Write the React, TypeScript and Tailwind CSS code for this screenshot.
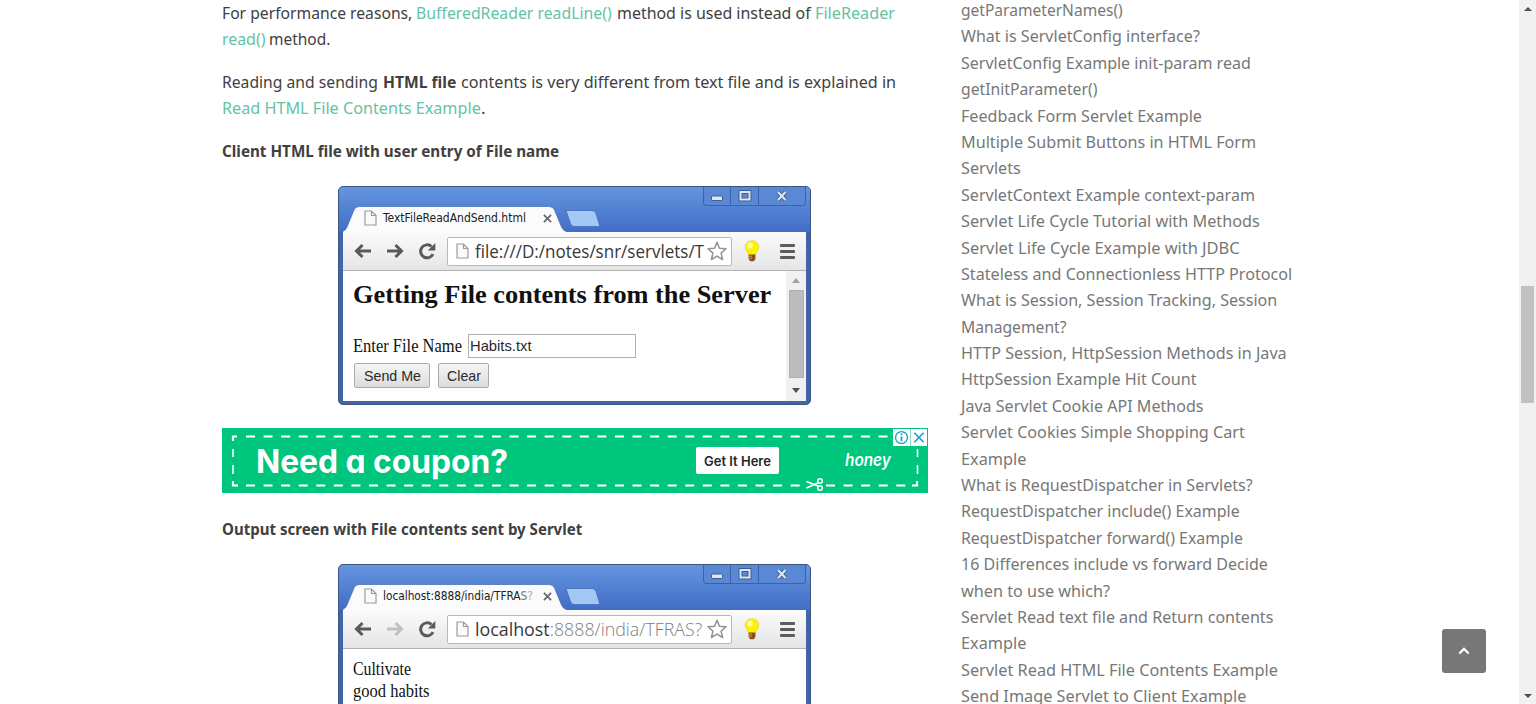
import { useLayoutEffect, useRef, type ReactNode } from "react";

/* Text squeezed or stretched horizontally to an exact width. */
function Fit({ w, className = "", children }: { w: number; className?: string; children: ReactNode }) {
  const ref = useRef<HTMLSpanElement>(null);
  useLayoutEffect(() => {
    const el = ref.current;
    if (el) el.style.transform = `scaleX(${w / el.offsetWidth})`;
  }, [w]);
  return (
    <span className={`inline-block shrink-0 whitespace-nowrap ${className}`} style={{ width: w }}>
      <span ref={ref} className="inline-block origin-left">
        {children}
      </span>
    </span>
  );
}

const sidebar: [string, number][] = [
  ["getParameterNames()", 162],
  ["What is ServletConfig interface?", 239],
  ["ServletConfig Example init-param read", 290],
  ["getInitParameter()", 136],
  ["Feedback Form Servlet Example", 241],
  ["Multiple Submit Buttons in HTML Form", 295],
  ["Servlets", 60],
  ["ServletContext Example context-param", 294],
  ["Servlet Life Cycle Tutorial with Methods", 299],
  ["Servlet Life Cycle Example with JDBC", 279],
  ["Stateless and Connectionless HTTP Protocol", 331],
  ["What is Session, Session Tracking, Session", 316],
  ["Management?", 106],
  ["HTTP Session, HttpSession Methods in Java", 326],
  ["HttpSession Example Hit Count", 236],
  ["Java Servlet Cookie API Methods", 243],
  ["Servlet Cookies Simple Shopping Cart", 284],
  ["Example", 65],
  ["What is RequestDispatcher in Servlets?", 292],
  ["RequestDispatcher include() Example", 279],
  ["RequestDispatcher forward() Example", 282],
  ["16 Differences include vs forward Decide", 307],
  ["when to use which?", 149],
  ["Servlet Read text file and Return contents", 312],
  ["Example", 65],
  ["Servlet Read HTML File Contents Example", 317],
  ["Send Image Servlet to Client Example", 285],
];

function PageIcon({ className }: { className: string }) {
  return (
    <svg viewBox="0 0 13 16" className={className} fill="#fafafa" stroke="#9b9b9b" strokeWidth="1.2">
      <path d="M1 1h6.5l4.5 4.5V15H1zM7.5 1v4.5H12" />
    </svg>
  );
}

function Star() {
  return (
    <svg viewBox="0 0 20 20" className="ml-px h-5 w-5 shrink-0" fill="#fff" stroke="#929292" strokeWidth="1.5" strokeLinejoin="round">
      <path d="M10 1.2l2.500 6 6.500.6-4.900 4.300 1.500 6.400L10 15.100l-5.600 3.400 1.500-6.400L1 7.800l6.500-.6z" />
    </svg>
  );
}

function Bulb() {
  return (
    <svg viewBox="0 0 16 22" className="h-[22px] w-4 shrink-0">
      <path d="M8 .7C3.700.7 1.200 3.700 1.200 7c0 3.600 3.300 5 3.300 8h7c0-3 3.300-4.400 3.300-8C14.800 3.700 12.300.7 8 .7z" fill="#fff200" stroke="#e9cf3a" strokeWidth=".7" />
      <ellipse cx="6.200" cy="5.500" rx="2.600" ry="3" fill="#fffdb0" />
      <path d="M4.600 14.500h6.800v4.500L9.800 21.200H6.200L4.600 19z" fill="#85521f" />
      <path d="M5 16.200h3M5 18.200h3" stroke="#d9a860" strokeWidth=".9" />
    </svg>
  );
}

function BrowserWindow({
  tab,
  address,
  forward,
  children,
}: {
  tab: ReactNode;
  address: ReactNode;
  forward: string;
  children: ReactNode;
}) {
  return (
    <div className="ml-[116px] flex h-[219px] w-[473px] shrink-0 flex-col overflow-hidden rounded-[5px] border border-[#3c5680] bg-[#4066a9]">
      <div className="relative flex h-[45px] shrink-0 items-start justify-between bg-gradient-to-b from-[#6595df] to-[#426dc6]">
        <svg viewBox="0 0 270 45" className="absolute left-0 top-0 h-[45px] w-[270px]">
          <path d="M227 23.500h26q3 0 4 3l3.500 11.500q.4 1.500-1 1.500h-24q-3 0-4-3z" fill="#a4c8f6" stroke="#426cb6" strokeWidth=".8" />
          <path d="M4 46v-2q3-1 4-4l7-17q1.500-3.500 5-3.500h190q4 0 5.500 3.500l7 17q1.700 4 6 5v1z" fill="#fbfbfb" stroke="#3f68b0" strokeWidth=".7" />
        </svg>
        <div className="relative ml-[25px] mt-[20px] flex h-[22px] items-center">
          <PageIcon className="h-4 w-[13px]" />
          <div className="ml-[6px] w-[160px] font-['DejaVu_Sans_Condensed','DejaVu_Sans',sans-serif] text-[12px] leading-[23px] text-[#202020]">
            {tab}
          </div>
          <svg viewBox="0 0 10 10" className="h-[9px] w-[9px]" stroke="#6a6a6a" strokeWidth="2">
            <path d="M1 1l8 8M9 1l-8 8" />
          </svg>
        </div>
        <div className="mr-[4px] flex h-[19px] w-[103px] rounded-b-[4px] border border-t-0 border-[#3b62a7] bg-[#5a88d5]">
          <div className="flex w-[27px] items-center justify-center border-r border-[#3b62a7]">
            <svg viewBox="0 0 14 12" className="mt-1 h-3 w-[14px]">
              <rect x="1.500" y="4" width="11" height="4.500" rx="1" fill="#dfe6f1" stroke="#3a5a90" />
            </svg>
          </div>
          <div className="flex w-[28px] items-center justify-center border-r border-[#3b62a7]">
            <svg viewBox="0 0 14 12" className="h-3 w-[14px]" fill="none">
              <rect x="2.500" y="2" width="9" height="7.500" stroke="#3a5a90" strokeWidth="3.800" />
              <rect x="2.500" y="2" width="9" height="7.500" stroke="#dfe6f1" strokeWidth="2" />
            </svg>
          </div>
          <div className="flex flex-1 items-center justify-center">
            <svg viewBox="0 0 14 12" className="h-3 w-[14px]" fill="none">
              <path d="M3 2l7.500 8M10.500 2L3 10" stroke="#3a5a90" strokeWidth="4" />
              <path d="M3 2l7.500 8M10.500 2L3 10" stroke="#dfe6f1" strokeWidth="2.200" />
            </svg>
          </div>
        </div>
      </div>
      <div className="mx-[4px] flex h-[39px] shrink-0 items-center border-b border-[#b2b2b2] bg-gradient-to-b from-[#fbfbfb] to-[#e5e5e5]">
        <svg viewBox="0 0 18 16" className="ml-[11px] h-4 w-[18px]" fill="none" stroke="#5a5a5a" strokeWidth="3">
          <path d="M17 8H3M8.500 2L2.500 8l6 6" />
        </svg>
        <svg viewBox="0 0 18 16" className={`ml-[14px] h-4 w-[18px] ${forward}`} fill="none" stroke="currentColor" strokeWidth="3">
          <path d="M1 8h14M9.500 2l6 6-6 6" />
        </svg>
        <svg viewBox="0 0 18 18" className="ml-[14px] h-[18px] w-[18px]" fill="none" stroke="#5a5a5a" strokeWidth="3">
          <path d="M15 12.200A6.500 6.500 0 1 1 13.500 4.500" />
          <path d="M17.300 1v7.500H9.800z" fill="#5a5a5a" stroke="none" />
        </svg>
        <div className="ml-[11px] flex h-[29px] w-[285px] items-center rounded-[2px] border border-[#b9b9b9] bg-white pl-[8px]">
          <PageIcon className="h-4 w-[13px] shrink-0" />
          <div className="ml-[6px] flex h-7 w-[231px] items-center text-[19px] leading-7">{address}</div>
          <Star />
        </div>
        <div className="ml-[12px] flex">
          <Bulb />
        </div>
        <div className="ml-[20px] flex w-[15px] flex-col gap-[3px]">
          <div className="h-[3px] rounded-[1px] bg-[#5c5c5c]" />
          <div className="h-[3px] rounded-[1px] bg-[#5c5c5c]" />
          <div className="h-[3px] rounded-[1px] bg-[#5c5c5c]" />
        </div>
      </div>
      <div className="mx-[4px] mb-[3px] flex flex-1 overflow-hidden bg-white font-['Liberation_Serif',serif] text-[#111]">{children}</div>
    </div>
  );
}

function Coupon() {
  return (
    <div className="relative mt-[23px] flex h-[65px] w-[706px] shrink-0 items-center bg-[#00c57d] font-['Inter',sans-serif]">
      <svg viewBox="0 0 706 65" className="absolute inset-0 h-[65px] w-[706px]" fill="none" stroke="#fff" strokeWidth="2.200">
        <path d="M24 8.500H672M24 57.500H584M604 57.500H688" strokeDasharray="9 8.570" />
        <path d="M11 13V8.500h4M11 53v4.500h5M690 57.500h5V53" />
        <path d="M11 21v8M11 37v9M695.500 21v8M695.500 37v9" strokeWidth="1.600" />
        <path d="M584.500 53.500L597 58.500M584.500 60L597 54.500" strokeWidth="1.800" />
        <circle cx="598" cy="53" r="2.300" strokeWidth="1.500" />
        <circle cx="598" cy="60" r="2.300" strokeWidth="1.500" />
      </svg>
      <Fit w={252} className="relative ml-[34px] mt-[2px] text-[32px] font-bold leading-[64px] text-white [font-feature-settings:'cv11']">
        Need a coupon?
      </Fit>
      <div className="relative ml-[188px] flex h-[27px] w-[83px] items-center justify-center rounded-[2px] bg-white">
        <Fit w={67} className="text-[13px] font-semibold leading-[26px] text-[#252525]">
          Get It Here
        </Fit>
      </div>
      <Fit w={46} className="relative ml-[66px] -mt-[2px] text-[17px] font-semibold italic leading-[26px] text-white [font-feature-settings:'cv11']">
        honey
      </Fit>
      <div className="absolute right-px top-px flex h-[17px] w-[34px] gap-px bg-[#8fdcc8]">
        <svg viewBox="0 0 17 18" className="h-[17px] w-[17px] bg-white" fill="none" stroke="#1d9fc4" strokeWidth="1.400">
          <circle cx="8.500" cy="9" r="6.300" />
          <path d="M8.500 8v5M8.500 4.800v1.700" strokeWidth="1.800" />
        </svg>
        <svg viewBox="0 0 17 18" className="h-[17px] w-[16px] bg-white" fill="none" stroke="#1d9fc4" strokeWidth="1.700">
          <path d="M3.500 4l10 10M13.500 4l-10 10" />
        </svg>
      </div>
    </div>
  );
}

export default function App() {
  return (
    <div className="flex h-[704px] w-[1536px] overflow-hidden bg-white font-['Noto_Sans',sans-serif] text-[17px] leading-[26.4px] text-[#404040]">
      <main className="ml-[222px] flex w-[706px] shrink-0 flex-col">
        <p className="flex h-[53px] shrink-0 flex-wrap content-start gap-x-[4.300px]">
          <Fit w={190}>For performance reasons,</Fit>
          <Fit w={196} className="text-[#63c3a4]">BufferedReader readLine()</Fit>
          <Fit w={194}>method is used instead of</Fit>
          <Fit w={80} className="text-[#63c3a4]">FileReader</Fit>
          <Fit w={43} className="text-[#63c3a4]">read()</Fit>
          <Fit w={61}>method.</Fit>
        </p>
        <p className="mt-[16px] flex h-[53px] shrink-0 flex-wrap content-start">
          <Fit w={156}>Reading and sending</Fit>
          <Fit w={73} className="mx-[5px] text-[16.500px] font-bold">HTML file</Fit>
          <Fit w={435}>contents is very different from text file and is explained in</Fit>
          <Fit w={259} className="text-[#63c3a4]">Read HTML File Contents Example</Fit>
          <span>.</span>
        </p>
        <p className="mt-[16px] h-[26px] shrink-0 text-[16.500px] font-bold">
          <Fit w={337}>Client HTML file with user entry of File name</Fit>
        </p>
        <div className="mt-[22px] flex shrink-0">
          <BrowserWindow
            forward="text-[#5a5a5a]"
            tab={<Fit w={143}>TextFileReadAndSend.html</Fit>}
            address={<Fit w={229} className="font-['Open_Sans',sans-serif] text-[#383838]">file:///D:/notes/snr/servlets/T</Fit>}
          >
            <div className="flex flex-1 flex-col pl-[10px] pt-[9px]">
              <Fit w={418} className="text-[26px] font-bold leading-[30px]">Getting File contents from the Server</Fit>
              <div className="mt-[24px] flex h-[24px] items-center">
                <Fit w={109} className="text-[18px] leading-6">Enter File Name</Fit>
                <div className="ml-[6px] flex h-6 w-[168px] items-center border border-[#b0b0b0] pl-px">
                  <Fit w={62} className="font-['Liberation_Sans',sans-serif] text-[15px] leading-5 text-[#2a2a2a]">Habits.txt</Fit>
                </div>
              </div>
              <div className="ml-px mt-[5px] flex gap-[8px] font-['Liberation_Sans',sans-serif] text-[15px] leading-[22px] text-[#2a2a2a]">
                <div className="flex h-[25px] w-[76px] items-center justify-center rounded-[2px] border border-[#aaa] bg-gradient-to-b from-[#f5f5f5] to-[#dcdcdc]">
                  <Fit w={57}>Send Me</Fit>
                </div>
                <div className="flex h-[25px] w-[51px] items-center justify-center rounded-[2px] border border-[#aaa] bg-gradient-to-b from-[#f5f5f5] to-[#dcdcdc]">
                  <Fit w={34}>Clear</Fit>
                </div>
              </div>
            </div>
            <div className="flex w-[20px] flex-col items-center bg-[#f1f1f1] pt-[7px]">
              <div className="h-0 w-0 border-x-4 border-b-[5px] border-x-transparent border-b-[#a3a3a3]" />
              <div className="mt-[7px] h-[88px] w-[15px] border border-[#b0b0b0] bg-[#bcbcbc]" />
              <div className="mt-[10px] h-0 w-0 border-x-4 border-t-[5px] border-x-transparent border-t-[#505050]" />
            </div>
          </BrowserWindow>
        </div>
        <Coupon />
        <p className="mt-[23px] h-[26px] shrink-0 text-[16.500px] font-bold">
          <Fit w={360}>Output screen with File contents sent by Servlet</Fit>
        </p>
        <div className="mt-[22px] flex shrink-0">
          <BrowserWindow
            forward="text-[#c0c0c0]"
            tab={
              <Fit w={150}>
                localhost:8888/india/TFRA<span className="text-[#777]">S</span>
                <span className="text-[#aaa]">?</span>
              </Fit>
            }
            address={
              <Fit w={227} className="font-['Open_Sans',sans-serif] font-light text-[#808080]">
                <span className="font-normal text-[#383838]">localhost</span>:8888/india/TFRAS?
              </Fit>
            }
          >
            <div className="flex flex-col pl-[10px] pt-[9px] text-[18px] leading-[22px]">
              <Fit w={58}>Cultivate</Fit>
              <Fit w={77}>good habits</Fit>
            </div>
          </BrowserWindow>
        </div>
      </main>
      <aside className="-mt-[3px] ml-[33px] flex w-[340px] shrink-0 flex-col text-[#777]">
        {sidebar.map(([label, w], i) => (
          <div key={i} className="h-[26.4px] shrink-0">
            <Fit w={w}>{label}</Fit>
          </div>
        ))}
      </aside>
      <div className="ml-auto flex h-full flex-col justify-end pb-[31px]">
        <div className="mr-[33px] flex h-[44px] w-[44px] items-center justify-center rounded-[3px] bg-[#777]">
          <svg viewBox="0 0 12 8" className="h-2 w-3" fill="none" stroke="#fff" strokeWidth="2.200">
            <path d="M1.300 6.500L6 1.900l4.700 4.600" />
          </svg>
        </div>
      </div>
      <div className="flex h-full w-[17px] shrink-0 flex-col items-center bg-[#f1f1f1]">
        <div className="mt-[7px] h-0 w-0 border-x-4 border-b-4 border-x-transparent border-b-[#505050]" />
        <div className="mt-[275px] h-[117px] w-[13px] bg-[#c1c1c1]" />
        <div className="mb-[6px] mt-auto h-0 w-0 border-x-4 border-t-4 border-x-transparent border-t-[#505050]" />
      </div>
    </div>
  );
}
